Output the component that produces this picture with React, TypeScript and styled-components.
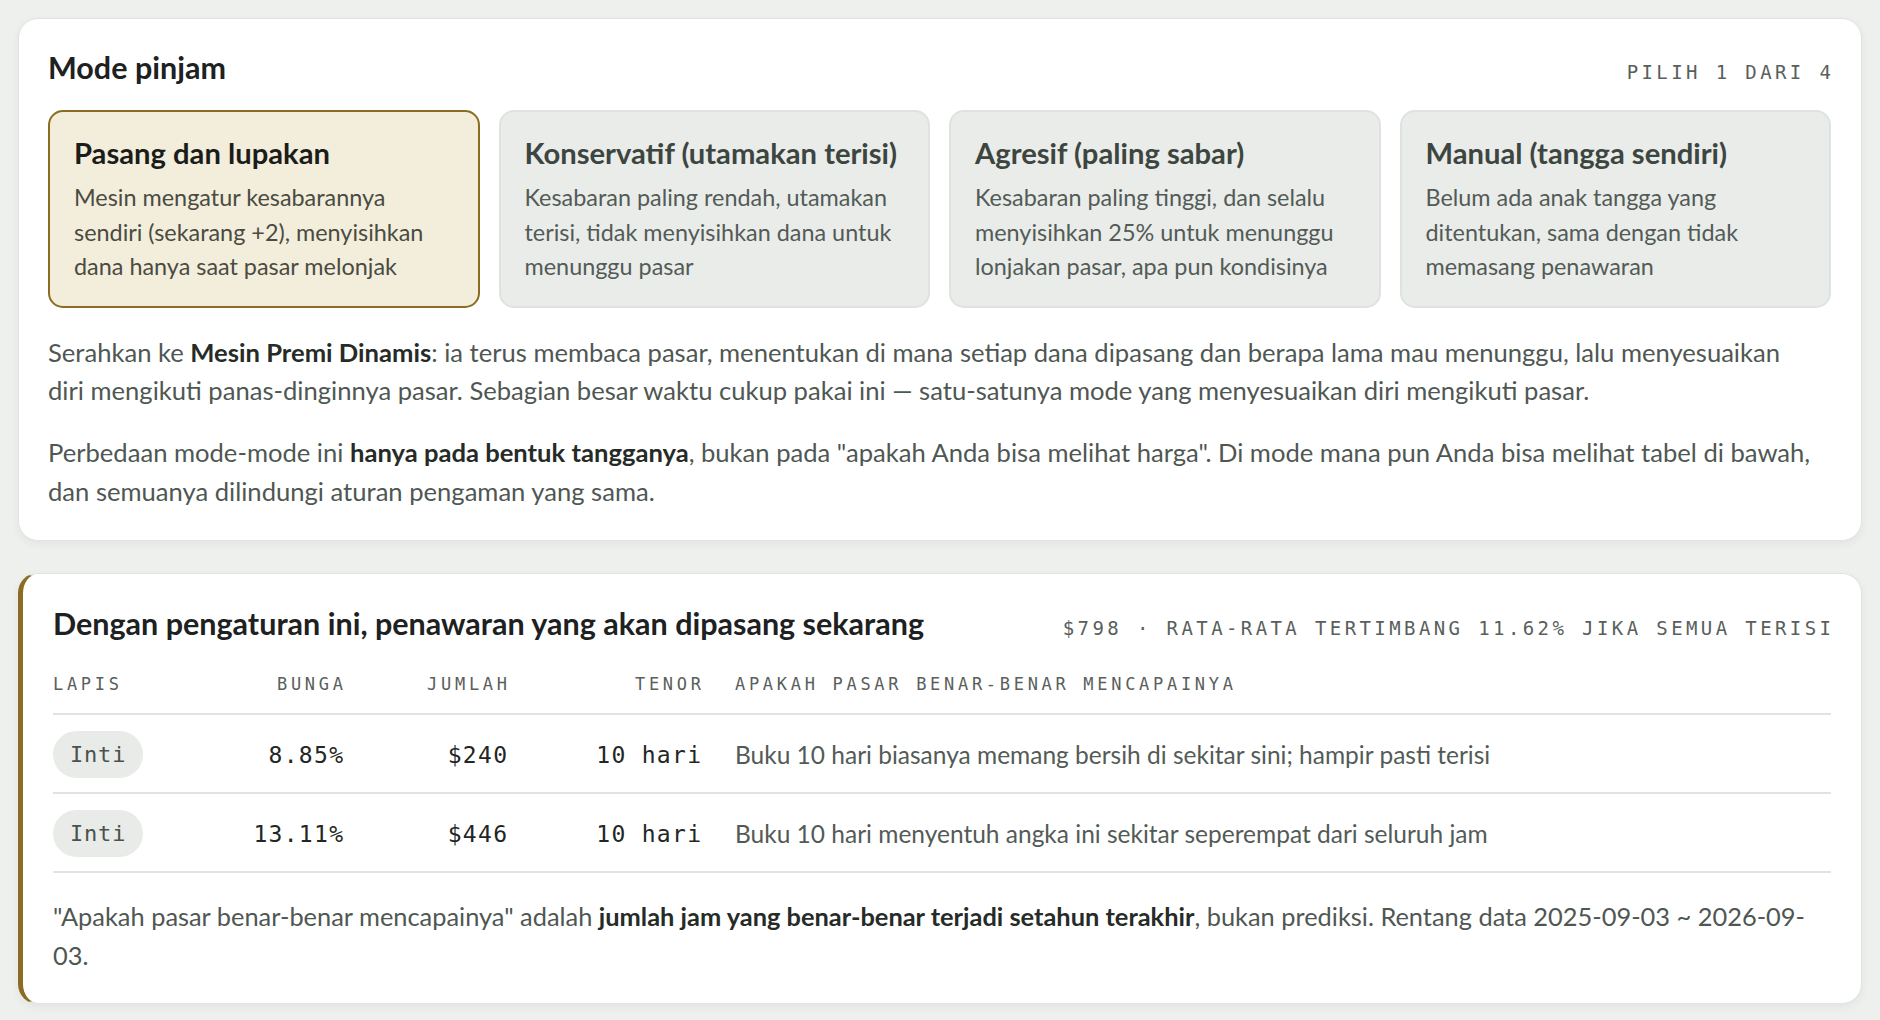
import * as React from 'react';
import styled, { createGlobalStyle } from 'styled-components';

const GlobalStyle = createGlobalStyle`
  * {
    box-sizing: border-box;
  }
  body {
    margin: 0;
    background-color: #eef0ee;
    font-family: Lato, 'Noto Sans', sans-serif;
    color: #4f5753;
  }
`;

const mono = `'DejaVu Sans Mono', 'Liberation Mono', monospace`;

const Page = styled.div`
  display: flex;
  flex-direction: column;
  gap: 32px;
  padding: 18px 18px;
`;

const Panel = styled.section<{ $accent?: boolean }>`
  background-color: #fff;
  border: 1px solid #e0e4e0;
  border-left: ${(p) => (p.$accent ? '5px solid #8b6c22' : '1px solid #e0e4e0')};
  border-radius: 20px;
  padding: ${(p) => (p.$accent ? '29px 30px 29px 30px' : '28px 30px 30px 29px')};
  box-shadow: 0 3px 8px rgba(40, 50, 40, 0.06);
`;

const Header = styled.div`
  display: flex;
  justify-content: space-between;
  align-items: baseline;
  height: 40px;
`;

const Title = styled.h2`
  margin: 0;
  font-size: 30.5px;
  font-weight: 700;
  line-height: 40px;
  color: #1d211f;
`;

const Meta = styled.span`
  font-family: ${mono};
  font-size: 19px;
  letter-spacing: 3.4px;
  margin-right: -3.4px;
  color: #59605b;
  text-transform: uppercase;
`;

const ModeGrid = styled.div`
  display: grid;
  grid-template-columns: repeat(4, 1fr);
  gap: 19px;
  margin-top: 23px;
`;

const ModeCard = styled.div<{ $selected?: boolean }>`
  background-color: ${(p) => (p.$selected ? '#f3eedb' : '#e9ece9')};
  border: ${(p) => (p.$selected ? '2px solid #8b6c22' : '2px solid #dfe3df')};
  border-radius: 15px;
  padding: 22px 26px 22px 24px;
  cursor: pointer;
`;

const ModeName = styled.div<{ $selected?: boolean }>`
  font-size: 29.2px;
  font-weight: 700;
  line-height: 38px;
  white-space: nowrap;
  color: ${(p) => (p.$selected ? '#1b1d1a' : '#3d4540')};
`;

const ModeDesc = styled.div<{ $selected?: boolean }>`
  margin-top: 8px;
  font-size: 23.4px;
  line-height: 34.5px;
  color: ${(p) => (p.$selected ? '#4a4b42' : '#535b56')};
`;

const Para = styled.p`
  margin: 25px 0 0;
  font-size: 25.6px;
  line-height: 38.4px;
  color: #4f5753;

  & + & {
    margin-top: 24px;
  }

  b {
    font-weight: 700;
    color: #262b28;
  }
`;

const Footnote = styled(Para)`
  margin-top: 24px;
  font-size: 25.4px;
`;

const Table = styled.div`
  margin-top: 18px;
`;

const Row = styled.div<{ $head?: boolean }>`
  display: grid;
  grid-template-columns: 200px 90px 164px 194px 1fr;
  align-items: center;
  border-bottom: 2px solid #e0e4e0;
  padding: ${(p) => (p.$head ? '12px 0 18px' : '16px 0 14px')};
`;

const HeadCell = styled.div<{ $right?: boolean; $wide?: boolean }>`
  font-family: ${mono};
  font-size: 17px;
  line-height: 22px;
  letter-spacing: 3.7px;
  text-transform: uppercase;
  color: #59605b;
  text-align: ${(p) => (p.$right ? 'right' : 'left')};
  margin-right: ${(p) => (p.$right ? '-3.7px' : '0')};
  padding-left: ${(p) => (p.$wide ? '34px' : '0')};
`;

const NumCell = styled.div`
  font-family: ${mono};
  font-size: 23px;
  letter-spacing: 1.3px;
  margin-right: -1.3px;
  color: #222624;
  text-align: right;
`;

const DescCell = styled.div`
  padding-left: 34px;
  font-size: 24.5px;
  color: #535b56;
`;

const Tier = styled.span`
  display: inline-flex;
  align-items: center;
  height: 47px;
  padding: 0 17px;
  border-radius: 24px;
  background-color: #e8ebe8;
  font-family: ${mono};
  font-size: 22px;
  letter-spacing: 0.8px;
  color: #4a524d;
`;

const modes = [
  {
    name: 'Pasang dan lupakan',
    desc: 'Mesin mengatur kesabarannya sendiri (sekarang +2), menyisihkan dana hanya saat pasar melonjak',
    selected: true,
  },
  {
    name: 'Konservatif (utamakan terisi)',
    desc: 'Kesabaran paling rendah, utamakan terisi, tidak menyisihkan dana untuk menunggu pasar',
  },
  {
    name: 'Agresif (paling sabar)',
    desc: 'Kesabaran paling tinggi, dan selalu menyisihkan 25% untuk menunggu lonjakan pasar, apa pun kondisinya',
  },
  {
    name: 'Manual (tangga sendiri)',
    desc: 'Belum ada anak tangga yang ditentukan, sama dengan tidak memasang penawaran',
  },
];

const rows = [
  { tier: 'Inti', rate: '8.85%', amount: '$240', term: '10 hari', note: 'Buku 10 hari biasanya memang bersih di sekitar sini; hampir pasti terisi' },
  { tier: 'Inti', rate: '13.11%', amount: '$446', term: '10 hari', note: 'Buku 10 hari menyentuh angka ini sekitar seperempat dari seluruh jam' },
];

export default function App() {
  return (
    <>
      <GlobalStyle />
      <Page>
        <Panel>
          <Header>
            <Title>Mode pinjam</Title>
            <Meta>Pilih 1 dari 4</Meta>
          </Header>
          <ModeGrid>
            {modes.map((m) => (
              <ModeCard key={m.name} $selected={m.selected}>
                <ModeName $selected={m.selected}>{m.name}</ModeName>
                <ModeDesc $selected={m.selected}>{m.desc}</ModeDesc>
              </ModeCard>
            ))}
          </ModeGrid>
          <Para>
            Serahkan ke <b>Mesin Premi Dinamis</b>: ia terus membaca pasar, menentukan di mana setiap dana dipasang dan
            berapa lama mau menunggu, lalu menyesuaikan
            <br />
            diri mengikuti panas-dinginnya pasar. Sebagian besar waktu cukup pakai ini — satu-satunya mode yang
            menyesuaikan diri mengikuti pasar.
          </Para>
          <Para>
            Perbedaan mode-mode ini <b>hanya pada bentuk tangganya</b>, bukan pada "apakah Anda bisa melihat harga". Di
            mode mana pun Anda bisa melihat tabel di bawah,
            <br />
            dan semuanya dilindungi aturan pengaman yang sama.
          </Para>
        </Panel>

        <Panel $accent>
          <Header>
            <Title>Dengan pengaturan ini, penawaran yang akan dipasang sekarang</Title>
            <Meta>$798 · rata-rata tertimbang 11.62% jika semua terisi</Meta>
          </Header>
          <Table>
            <Row $head>
              <HeadCell>Lapis</HeadCell>
              <HeadCell $right>Bunga</HeadCell>
              <HeadCell $right>Jumlah</HeadCell>
              <HeadCell $right>Tenor</HeadCell>
              <HeadCell $wide>Apakah pasar benar-benar mencapainya</HeadCell>
            </Row>
            {rows.map((r) => (
              <Row key={r.rate}>
                <div>
                  <Tier>{r.tier}</Tier>
                </div>
                <NumCell>{r.rate}</NumCell>
                <NumCell>{r.amount}</NumCell>
                <NumCell>{r.term}</NumCell>
                <DescCell>{r.note}</DescCell>
              </Row>
            ))}
          </Table>
          <Footnote>
            "Apakah pasar benar-benar mencapainya" adalah <b>jumlah jam yang benar-benar terjadi setahun terakhir</b>,
            bukan prediksi. Rentang data 2025-09-03 ~ 2026-09-
            <br />
            03.
          </Footnote>
        </Panel>
      </Page>
    </>
  );
}
